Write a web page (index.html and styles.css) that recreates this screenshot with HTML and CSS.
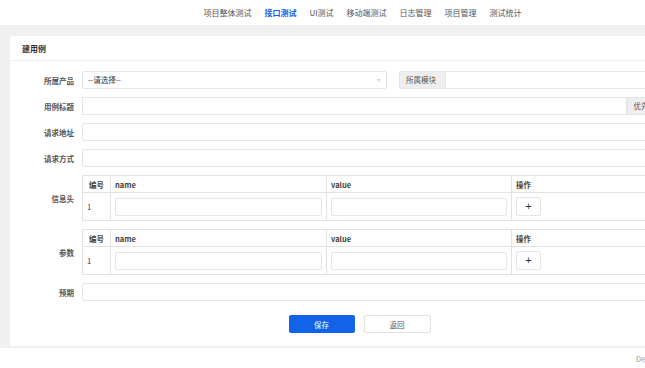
FILE: index.html
```html
<!DOCTYPE html>
<html lang="zh-CN">
<head>
  <meta charset="UTF-8">
  <meta name="viewport" content="width=device-width, initial-scale=1.0">
  <title>建用例</title>
  <link rel="stylesheet" href="styles.css">
</head>
<body>
  <div class="page">
    <nav class="topnav">
      <a href="#">项目整体测试</a>
      <a href="#" class="active">接口测试</a>
      <a href="#">UI测试</a>
      <a href="#">移动端测试</a>
      <a href="#">日志管理</a>
      <a href="#">项目管理</a>
      <a href="#">测试统计</a>
    </nav>

    <div class="main">
      <div class="card">
        <div class="card-head">建用例</div>
        <form class="card-body">
          <div class="row">
            <label class="label">所属产品</label>
            <div class="field">
              <div class="select product">--请选择--<span class="caret">▾</span></div>
              <div class="group module">
                <span class="addon">所属模块</span>
                <input type="text" class="input">
              </div>
            </div>
          </div>

          <div class="row">
            <label class="label">用例标题</label>
            <div class="field">
              <div class="group">
                <input type="text" class="input">
                <span class="addon">优先级</span>
                <div class="select level"></div>
              </div>
            </div>
          </div>

          <div class="row">
            <label class="label">请求地址</label>
            <div class="field"><input type="text" class="input"></div>
          </div>

          <div class="row">
            <label class="label">请求方式</label>
            <div class="field"><input type="text" class="input"></div>
          </div>

          <!-- headers -->
          <div class="row">
            <label class="label">信息头</label>
            <div class="field">
              <table class="kv">
                <thead>
                  <tr><th class="c-no">编号</th><th class="c-name">name</th><th class="c-value">value</th><th>操作</th></tr>
                </thead>
                <tbody>
                  <tr>
                    <td>1</td>
                    <td><input type="text" class="input"></td>
                    <td><input type="text" class="input"></td>
                    <td><button type="button" class="btn-add">+</button></td>
                  </tr>
                </tbody>
              </table>
            </div>
          </div>

          <!-- params -->
          <div class="row">
            <label class="label">参数</label>
            <div class="field">
              <table class="kv">
                <thead>
                  <tr><th class="c-no">编号</th><th class="c-name">name</th><th class="c-value">value</th><th>操作</th></tr>
                </thead>
                <tbody>
                  <tr>
                    <td>1</td>
                    <td><input type="text" class="input"></td>
                    <td><input type="text" class="input"></td>
                    <td><button type="button" class="btn-add">+</button></td>
                  </tr>
                </tbody>
              </table>
            </div>
          </div>

          <div class="row">
            <label class="label">预期</label>
            <div class="field"><input type="text" class="input"></div>
          </div>

          <div class="actions">
            <button type="button" class="btn btn-primary">保存</button>
            <button type="button" class="btn">返回</button>
          </div>
        </form>
      </div>
    </div>

    <footer class="footer">Design by 测试平台</footer>
  </div>
</body>
</html>
```

FILE: styles.css
```css
html, body {
  margin: 0;
  padding: 0;
  overflow: hidden;
}
body {
  font-family: "Noto Sans CJK SC", "Liberation Sans", sans-serif;
  font-size: 7.5px;
  color: #333;
  background-color: #fff;
}
.page {
  width: 725px;
}
.topnav {
  height: 25px;
  display: flex;
  justify-content: center;
  align-items: center;
  gap: 13px;
  background-color: #fff;
}
.topnav a {
  font-size: 8px;
  color: #555;
  text-decoration: none;
}
.topnav a.active {
  color: #1660e0;
  font-weight: bold;
}
.main {
  background-color: #f0f0f0;
  padding: 11px 10px 2px;
}
.card {
  background-color: #fff;
  border-radius: 2px;
}
.card-head {
  height: 24px;
  line-height: 25px;
  padding-left: 12px;
  font-size: 8px;
  font-weight: bold;
  color: #333;
  border-bottom: 1px solid #f0f0f0;
}
.card-body {
  padding: 10px 10px 13px 0;
  display: flex;
  flex-direction: column;
  gap: 8px;
}
.row {
  display: flex;
  align-items: center;
}
.label {
  width: 64px;
  padding-right: 8px;
  text-align: right;
  font-weight: bold;
  color: #555;
  flex-shrink: 0;
}
.field {
  flex: 1;
  display: flex;
  gap: 12px;
}
.input {
  box-sizing: border-box;
  height: 18px;
  width: 100%;
  border: 1px solid #e6e6e6;
  border-radius: 2px;
  padding: 0 5px;
  font: inherit;
  background: #fff;
  outline: none;
}
.select {
  box-sizing: border-box;
  height: 18px;
  line-height: 16px;
  border: 1px solid #e6e6e6;
  border-radius: 2px;
  padding: 0 5px;
  position: relative;
  color: #333;
  background: #fff;
}
.select.product {
  width: 305px;
  flex-shrink: 0;
}
.select.level {
  width: 42px;
  flex-shrink: 0;
  border-radius: 0 2px 2px 0;
}
.caret {
  position: absolute;
  right: 6px;
  top: 0;
  color: #ccc;
  font-size: 6px;
}
.group {
  flex: 1;
  display: flex;
}
.group .input {
  border-radius: 0;
}
.addon {
  box-sizing: border-box;
  height: 18px;
  line-height: 16px;
  padding: 0 6px;
  background-color: #eee;
  border: 1px solid #e6e6e6;
  color: #555;
  white-space: nowrap;
  flex-shrink: 0;
}
.module .addon {
  width: 46px;
  border-radius: 2px 0 0 2px;
  border-right: none;
}
.kv {
  width: 100%;
  border-collapse: collapse;
  table-layout: fixed;
}
.kv th,
.kv td {
  border: 1px solid #e2e2e2;
  padding: 0 4px;
  text-align: left;
  font-weight: normal;
}
.kv th {
  height: 16px;
  font-weight: bold;
  color: #444;
}
.kv td {
  height: 27px;
  color: #333;
}
.kv .c-no {
  width: 19px;
  text-align: center;
}
.kv .c-name {
  width: 207px;
}
.kv .c-value {
  width: 176px;
}
.btn-add {
  width: 25px;
  height: 19px;
  border: 1px solid #e6e6e6;
  border-radius: 2px;
  background: #fff;
  color: #333;
  font-size: 11px;
  line-height: 15px;
  padding: 0;
  cursor: pointer;
}
.actions {
  display: flex;
  justify-content: center;
  gap: 9px;
  margin-top: 6px;
  padding-left: 4px;
}
.btn {
  width: 67px;
  height: 18px;
  border: 1px solid #e2e2e2;
  border-radius: 2px;
  background: #fff;
  color: #555;
  font: inherit;
  cursor: pointer;
}
.btn-primary {
  width: 66px;
  background-color: #1263e8;
  border-color: #1263e8;
  color: #fff;
}
.footer {
  height: 21px;
  line-height: 21px;
  padding-left: 636px;
  color: #999;
  font-size: 7.5px;
  white-space: nowrap;
  background: #fff;
}
```
